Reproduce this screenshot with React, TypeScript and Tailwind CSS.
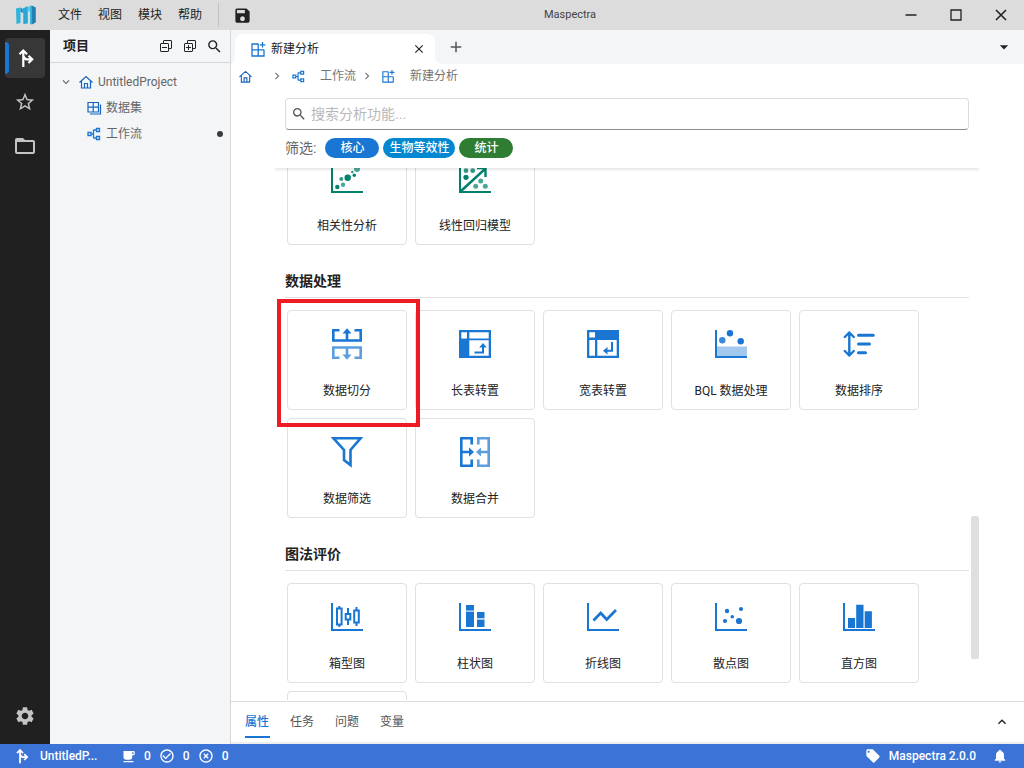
import type { ReactNode } from "react";
import { VscCollapseAll, VscExpandAll } from "react-icons/vsc";
import {
  MdArrowDropDown,
  MdCheckCircleOutline,
  MdClose,
  MdAdd,
  MdExpandMore,
  MdChevronRight,
  MdExpandLess,
  MdFolderOpen,
  MdHighlightOff,
  MdLocalCafe,
  MdLocalOffer,
  MdNotifications,
  MdSave,
  MdSearch,
  MdSettings,
  MdStarOutline,
} from "react-icons/md";

type IconProps = { className?: string };

function Logo() {
  return (
    <svg width="22" height="22" viewBox="0 0 22 22" aria-hidden="true">
      <path d="M1 4.500 5.500 3.500V19L1.500 20Z" fill="#2fb4dc" />
      <path d="M5.500 3.500 8.500 5.500V9L5.500 8Z" fill="#1c8fc4" />
      <path d="M7 5 12.800 2v17.500l-4.500.500V8.500L7 8.800Z" fill="#2aa6d6" />
      <path d="M12.800 3.500 15.500 1.500v5.500l-2.700 1Z" fill="#5cc8e4" />
      <path d="M15 2 17 1.500V20.500l-2-.5Z" fill="#38b6dd" />
      <path d="M16.800 1.500 20.800 3.500V18.500L16.800 20.500Z" fill="#2380b4" />
    </svg>
  );
}

function BranchIcon({ className }: IconProps) {
  return (
    <svg className={className} viewBox="0 0 20 20" fill="none" stroke="currentColor" strokeWidth="2.200" aria-hidden="true">
      <path d="M6.300 19V3M2.500 6.300 6.300 2.500 10 6.300M6.300 7.500Q7 11.300 10 11.300h5M11.500 7.700l3.700 3.600-3.700 3.700" />
    </svg>
  );
}

function HomeIcon({ className }: IconProps) {
  return (
    <svg className={className} viewBox="0 0 14 14" fill="none" stroke="#1565c0" strokeWidth="1.200" aria-hidden="true">
      <path d="M.5 7.500 7 1.500l6.500 6M2.500 6v7h9V6M5.500 13V8.500h3V13" />
    </svg>
  );
}

function DatasetIcon({ className }: IconProps) {
  return (
    <svg className={className} viewBox="0 0 15 15" fill="none" stroke="#1565c0" strokeWidth="1.200" aria-hidden="true">
      <path d="M1 1.500h10.500v9.500H1ZM6.200 1.500V11M1 6.200h10.500M13.500 3.500V13H3" />
    </svg>
  );
}

function FlowIcon({ className }: IconProps) {
  return (
    <svg className={className} viewBox="0 0 14 14" fill="none" stroke="#1976d2" strokeWidth="1.300" aria-hidden="true">
      <path d="M1 5.500h3v3H1ZM9.500 1.500h3v3h-3ZM9.500 9.500h3v3h-3ZM4 7h2.500M9.500 3H7q-.5 0-.5.500V10.500q0 .500.500.500h2.500" />
    </svg>
  );
}

function NewAnalysisIcon({ className }: IconProps) {
  return (
    <svg className={className} viewBox="0 0 15 15" fill="none" stroke="#1976d2" strokeWidth="1.300" aria-hidden="true">
      <path d="M7.500 2H1v12h12V7.800M7.200 2v12M1 7.800h12M11.500 0v5.500M8.700 2.800h5.600" />
    </svg>
  );
}

function CardIcon({ children, color = "text-[#1976d2]" }: { children: ReactNode; color?: string }) {
  return (
    <svg className={`${color} size-8`} viewBox="0 0 32 32" fill="none" stroke="currentColor" strokeWidth="2" aria-hidden="true">
      {children}
    </svg>
  );
}

const Axis = () => <path d="M1 2v27h31" />;

type Dot = [number, number, number, number?];
const Dots = ({ items }: { items: Dot[] }) => (
  <g fill="currentColor" stroke="none">
    {items.map(([x, y, r, o], i) => (
      <circle key={i} cx={x} cy={y} r={r} opacity={o ?? 1} />
    ))}
  </g>
);

const correlation = (
  <CardIcon color="text-[#00816d]">
    <Axis />
    <Dots items={[[16.7, 14.7, 3.2], [26, 6, 3, 0.7], [21.3, 9, 1.3, 0.8], [23.3, 12.3, 1.7], [10.3, 16, 2, 0.8], [12, 21.7, 2.2, 0.7], [6.3, 24, 2.2]]} />
  </CardIcon>
);
const regression = (
  <CardIcon color="text-[#00816d]">
    <Axis />
    <path d="M2 28 26.500 5.500M18 5h8.500v9" strokeWidth="2.400" />
    <Dots items={[[7, 7.7, 2.4, 0.8], [13.7, 7.7, 2.4, 0.8], [7, 14.3, 2.6], [21.7, 18, 2.5, 0.7], [16.7, 23.3, 2.5, 0.7], [26.3, 23.3, 2.5, 0.7]]} />
  </CardIcon>
);
const split = (
  <CardIcon>
    <g strokeWidth="2.600">
      <path d="M8.500 2.300H2.300v10.200h27.400V2.300h-6.200M16 12V4" />
      <path d="M16 .3 20.500 5.500h-9Z" fill="currentColor" stroke="none" />
      <g opacity=".7">
        <path d="M8.500 29.700H2.300V19.500h27.400v10.200h-6.200M16 20v8" />
        <path d="M16 31.700 20.500 26.500h-9Z" fill="currentColor" stroke="none" />
      </g>
    </g>
  </CardIcon>
);
const longTable = (
  <CardIcon>
    <path d="M0 2h32v28H0ZM2.300 4.300v6.200H8V4.300ZM10.300 4.300v6.200h19.400V4.300ZM10.300 12.300v15.400h19.400V12.300Z" fill="currentColor" fillRule="evenodd" stroke="none" />
    <path d="M15.500 24.500H24V18" />
    <path d="M24 15l3.800 4.500h-7.600Z" fill="currentColor" stroke="none" />
  </CardIcon>
);
const wideTable = (
  <CardIcon>
    <path d="M0 2h32v28H0ZM2.300 4.300v5.200H8V4.300ZM2.300 12v15.700H8V12ZM10.300 12v15.700h19.400V12Z" fill="currentColor" fillRule="evenodd" stroke="none" />
    <path d="M25 14v8.700h-5" />
    <path d="M16 22.700 20.500 18.900v7.600Z" fill="currentColor" stroke="none" />
  </CardIcon>
);
const bql = (
  <CardIcon>
    <path d="M2 18.500h30V28H2Z" fill="currentColor" opacity=".4" stroke="none" />
    <Axis />
    <Dots items={[[15, 5.3, 3.2], [7.3, 12.3, 3.2, 0.85], [25.7, 13.3, 3.2]]} />
  </CardIcon>
);
const sort = (
  <CardIcon>
    <g strokeLinecap="round" strokeLinejoin="round">
      <path d="M6.300 4.500v23M1.800 9l4.500-4.500L10.800 9M1.800 23l4.500 4.500 4.500-4.500" strokeWidth="2.400" />
      <path d="M15.500 7.300h14.800M15.500 16h11M15.500 24.700h7" strokeWidth="3" />
    </g>
  </CardIcon>
);
const filter = (
  <CardIcon>
    <path d="M2.500 2.300h27L19.500 14v15L13 24V14Z" strokeWidth="2.600" />
  </CardIcon>
);
const merge = (
  <CardIcon>
    <g strokeWidth="2.600">
      <path d="M12.700 8.500V2.300H2.300v27.400h10.400v-6.200M2 16h9" />
      <path d="M15 16 10 11.500v9Z" fill="currentColor" stroke="none" />
      <g opacity=".7">
        <path d="M19.300 8.500V2.300h10.400v27.400H19.300v-6.200M30 16h-9" />
        <path d="M17 16 22 11.500v9Z" fill="currentColor" stroke="none" />
      </g>
    </g>
  </CardIcon>
);
const boxPlot = (
  <CardIcon>
    <Axis />
    <path d="M6 7.500h4.600v16H6ZM8.300 5v2.500M8.300 23.500V26M14.700 13h4.600v5.500h-4.600ZM17 7v6M17 18.500V24M23.200 9.500h4.600v12h-4.600ZM25.500 6v3.500M25.500 21.500V25" strokeWidth="2" />
  </CardIcon>
);
const stacked = (
  <CardIcon>
    <Axis />
    <g fill="currentColor" stroke="none">
      <path d="M7 4h8v5.500H7ZM7 10.800h8V26H7ZM18 11h7.500v6H18ZM18 18.800h7.500V26H18Z" />
      <path d="M7 9.500h8v1.300H7ZM18 17h7.500v1.800H18Z" opacity=".3" />
    </g>
  </CardIcon>
);
const line = (
  <CardIcon>
    <Axis />
    <path d="m6.500 19.500 7.200-7.500 6 6.500 9.300-9.500" strokeWidth="2.700" />
  </CardIcon>
);
const scatter = (
  <CardIcon>
    <Axis />
    <Dots items={[[12, 10, 2.2], [26, 8, 2.1], [17.3, 15.7, 1.8], [10, 20, 2.1], [24, 20, 3.1]]} />
  </CardIcon>
);
const histogram = (
  <CardIcon>
    <Axis />
    <path d="M5 17h7v10H5ZM13.200 3.700h7.300V27h-7.300ZM21.700 10.300h7.200V27h-7.200Z" fill="currentColor" stroke="none" />
  </CardIcon>
);

type Item = { label: string; icon?: ReactNode; marked?: boolean };

const processing: Item[] = [
  { label: "数据切分", icon: split, marked: true },
  { label: "长表转置", icon: longTable },
  { label: "宽表转置", icon: wideTable },
  { label: "BQL 数据处理", icon: bql },
  { label: "数据排序", icon: sort },
  { label: "数据筛选", icon: filter },
  { label: "数据合并", icon: merge },
];
const charts: Item[] = [
  { label: "箱型图", icon: boxPlot },
  { label: "柱状图", icon: stacked },
  { label: "折线图", icon: line },
  { label: "散点图", icon: scatter },
  { label: "直方图", icon: histogram },
  { label: "" },
];

function Cards({ items }: { items: Item[] }) {
  return (
    <div className="flex flex-wrap gap-2 px-0.5">
      {items.map((item) => (
        <div key={item.label} className="relative h-[100px] w-[120px]">
          <button type="button" className="flex size-full flex-col items-center gap-[21px] rounded border border-[#e0e0e0] bg-white pt-[17px] leading-5">
            {item.icon}
            {item.label && <span>{item.label}</span>}
          </button>
          {item.marked && (
            <div className="pointer-events-none absolute -top-[11px] -right-[13px] -bottom-[17px] -left-[10px] z-10 border-4 border-[#ed1c24]" />
          )}
        </div>
      ))}
    </div>
  );
}

function Section({ title, items }: { title: string; items: Item[] }) {
  return (
    <section>
      <h2 className="mb-3 border-b border-[#e0e0e0] pt-[26px] pb-1.5 text-sm leading-5 font-bold">{title}</h2>
      <Cards items={items} />
    </section>
  );
}

function TitleBar() {
  return (
    <header className="flex h-[30px] shrink-0 items-center bg-[#dcdcdc] pr-px">
      <div className="pr-[21px] pl-[15px]">
        <Logo />
      </div>
      <nav className="flex gap-4">
        {["文件", "视图", "模块", "帮助"].map((m) => (
          <button key={m} type="button">{m}</button>
        ))}
      </nav>
      <div className="ml-4 h-6 w-px bg-[#c0c0c0]" />
      <button type="button" aria-label="保存" className="ml-[14px]">
        <MdSave className="size-[19px]" />
      </button>
      <span className="flex-1 text-center text-[11px] text-[#444]">Maspectra</span>
      <button type="button" aria-label="最小化" className="grid h-[30px] w-[45px] place-items-center">
        <svg width="12" height="12" viewBox="0 0 12 12"><path d="M.5 6h11" stroke="#222" strokeWidth="1.500" /></svg>
      </button>
      <button type="button" aria-label="最大化" className="grid h-[30px] w-[45px] place-items-center">
        <svg width="12" height="12" viewBox="0 0 12 12"><path d="M1 1h10v10H1Z" stroke="#222" strokeWidth="1.300" fill="none" /></svg>
      </button>
      <button type="button" aria-label="关闭" className="grid h-[30px] w-[45px] place-items-center">
        <svg width="12" height="12" viewBox="0 0 12 12"><path d="m1 1 10 10M11 1 1 11" stroke="#222" strokeWidth="1.600" /></svg>
      </button>
    </header>
  );
}

function ActivityBar() {
  return (
    <nav className="flex w-[50px] shrink-0 flex-col items-center bg-[#202020] py-2 text-[#c4c4c4]">
      <button type="button" aria-label="流程" className="flex h-10 w-10 items-center rounded bg-[#373737] text-white">
        <span className="h-8 w-1 rounded-r bg-[#1976d2]" />
        <BranchIcon className="ml-2 size-5" />
      </button>
      <button type="button" aria-label="收藏" className="mt-1 grid size-10 place-items-center"><MdStarOutline className="size-[22px]" /></button>
      <button type="button" aria-label="文件夹" className="mt-1 grid size-10 place-items-center"><MdFolderOpen className="size-6" /></button>
      <button type="button" aria-label="设置" className="mt-auto grid size-10 place-items-center"><MdSettings className="size-[22px]" /></button>
    </nav>
  );
}

function ProjectPanel() {
  return (
    <aside className="flex w-[181px] shrink-0 flex-col border-r border-[#d5d6d8] bg-[#f4f5f7]">
      <div className="flex h-[33px] items-center gap-2 border-b border-[#d5d6d8] pr-[7px] pl-[13px]">
        <h1 className="mr-auto text-[13px] font-bold">项目</h1>
        <button type="button" aria-label="全部折叠"><VscCollapseAll className="size-4" /></button>
        <button type="button" aria-label="全部展开"><VscExpandAll className="size-4" /></button>
        <button type="button" aria-label="搜索"><MdSearch className="size-[17px]" /></button>
      </div>
      <ul className="pt-[6px] leading-[26px] text-[#666]">
        <li className="flex items-center pl-[9px]">
          <MdExpandMore className="size-[14px]" />
          <HomeIcon className="ml-1.5 size-[14px]" />
          <span className="ml-[5px]">UntitledProject</span>
        </li>
        <li className="flex items-center gap-1 pl-[37px]">
          <DatasetIcon className="size-[15px]" />
          <span>数据集</span>
        </li>
        <li className="flex items-center gap-[5px] pr-[7px] pl-[37px]">
          <FlowIcon className="size-[14px]" />
          <span>工作流</span>
          <i className="ml-auto size-1.5 rounded-full bg-[#3a3a3a]" />
        </li>
      </ul>
    </aside>
  );
}

function TabBar() {
  return (
    <div className="flex h-[34px] shrink-0 items-end bg-[#f4f5f7] pl-1">
      <div className="relative flex h-[30px] w-[200px] items-center rounded-t-lg bg-white pr-[9px] pl-4">
        <svg className="absolute bottom-0 -left-1" width="4" height="8" viewBox="0 0 4 8" aria-hidden="true"><path d="M4 0v8H0q4-2 4-8" fill="#fff" /></svg>
        <svg className="absolute -right-2 bottom-0" width="8" height="8" viewBox="0 0 8 8" aria-hidden="true"><path d="M0 0v8h8Q0 8 0 0" fill="#fff" /></svg>
        <NewAnalysisIcon className="size-[15px]" />
        <span className="ml-[5px]">新建分析</span>
        <button type="button" aria-label="关闭标签" className="ml-auto"><MdClose className="size-[14px]" /></button>
      </div>
      <button type="button" aria-label="新标签" className="ml-3 grid h-[34px] w-[18px] place-items-center text-[#555]"><MdAdd className="size-[18px]" /></button>
      <button type="button" aria-label="标签列表" className="mr-3.5 ml-auto grid h-[34px] w-4 place-items-center"><MdArrowDropDown className="size-5" /></button>
    </div>
  );
}

function Breadcrumb() {
  return (
    <nav className="flex h-6 shrink-0 items-center pl-2 text-[#757575]">
      <HomeIcon className="size-[13px]" />
      <MdChevronRight className="ml-[18px] size-[14px]" />
      <FlowIcon className="ml-2 size-[13px]" />
      <a href="#flow" className="ml-[15px]">工作流</a>
      <MdChevronRight className="ml-1 size-[14px]" />
      <NewAnalysisIcon className="ml-2 size-[13px]" />
      <a href="#new" className="ml-[15px]">新建分析</a>
    </nav>
  );
}

function Library() {
  return (
    <div className="mr-[45px] ml-11 flex min-h-0 flex-1 flex-col">
      <div className="px-2.5 pt-2.5 pb-2.5">
        <div className="flex h-8 items-center gap-1 rounded border border-[#dcdcdc] border-b-[#8f8f8f] px-[5px]">
          <MdSearch className="size-4 text-[#555]" />
          <input type="text" aria-label="搜索分析功能" placeholder="搜索分析功能..." className="h-[30px] min-w-0 flex-1 bg-transparent text-sm outline-none placeholder:text-[#b8b8b8]" />
        </div>
        <div className="mt-2 flex h-5 items-center gap-1 leading-5 font-medium text-white">
          <span className="mr-[5px] text-sm font-normal text-[#666]">筛选:</span>
          <button type="button" className="w-[54px] rounded-full bg-[#1976d2]">核心</button>
          <button type="button" className="w-[72px] rounded-full bg-[#0288d1]">生物等效性</button>
          <button type="button" className="w-[54px] rounded-full bg-[#2e7d32]">统计</button>
        </div>
      </div>
      <div className="relative min-h-0 flex-1 overflow-hidden px-2.5">
        <div className="absolute inset-x-0 top-0 z-20 h-1 bg-linear-to-b from-black/10 to-transparent" />
        <div className="-mt-[23px]">
          <Cards items={[{ label: "相关性分析", icon: correlation }, { label: "线性回归模型", icon: regression }]} />
        </div>
        <Section title="数据处理" items={processing} />
        <Section title="图法评价" items={charts} />
        <div className="absolute right-0 bottom-[41px] h-[143px] w-2 rounded-xs bg-[#dfdfdf]" />
      </div>
    </div>
  );
}

function BottomPanel() {
  return (
    <div className="mt-px flex h-[43px] shrink-0 items-start border-t border-b-2 border-t-[#dcdcdc] border-b-[#eee] px-3.5 text-[#555]">
      <div className="flex gap-5">
        {["属性", "任务", "问题", "变量"].map((t, i) => (
          <button key={t} type="button" className={i === 0 ? "w-[25px] border-b-2 border-[#1976d2] pt-[11px] pb-[5px] text-left leading-[18px] font-medium text-[#1976d2]" : "w-[25px] border-b-2 border-transparent pt-[11px] pb-[5px] text-left leading-[18px]"}>
            {t}
          </button>
        ))}
      </div>
      <button type="button" aria-label="展开" className="ml-auto pt-3 text-[#222]"><MdExpandLess className="size-4" /></button>
    </div>
  );
}

function StatusBar() {
  return (
    <footer className="flex h-6 shrink-0 items-center bg-[#3b73d6] pr-4 pl-[15px] font-medium text-white">
      <BranchIcon className="size-4" />
      <span className="ml-[9px] w-[61px]">UntitledP...</span>
      <MdLocalCafe className="ml-5 size-[15px]" />
      <span className="ml-2">0</span>
      <MdCheckCircleOutline className="ml-2 size-4" />
      <span className="ml-2">0</span>
      <MdHighlightOff className="ml-2 size-4" />
      <span className="ml-2">0</span>
      <MdLocalOffer className="ml-auto size-4" />
      <span className="ml-2">Maspectra 2.0.0</span>
      <MdNotifications className="ml-4 size-4" />
    </footer>
  );
}

export default function App() {
  return (
    <div className="flex h-screen flex-col overflow-hidden bg-white font-[Roboto,'Noto_Sans_CJK_SC',sans-serif] text-xs text-[#222]">
      <TitleBar />
      <div className="flex min-h-0 flex-1">
        <ActivityBar />
        <ProjectPanel />
        <main className="flex min-w-0 flex-1 flex-col">
          <TabBar />
          <Breadcrumb />
          <Library />
          <BottomPanel />
        </main>
      </div>
      <StatusBar />
    </div>
  );
}
